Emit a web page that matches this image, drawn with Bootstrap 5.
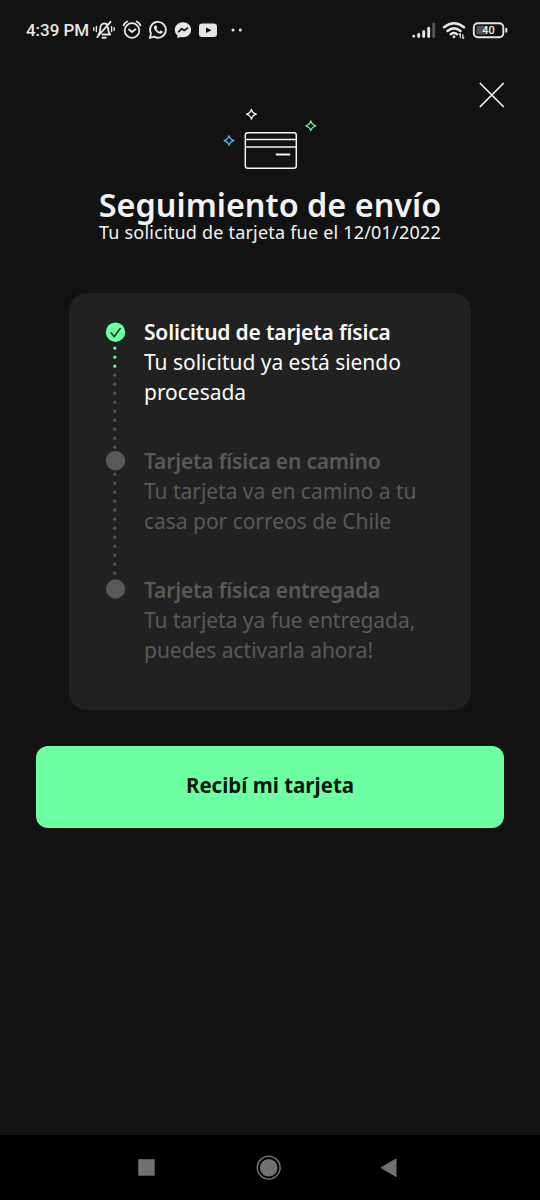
<!DOCTYPE html>
<html lang="es">
<head>
<meta charset="utf-8">
<meta name="viewport" content="width=device-width, initial-scale=1">
<title>Seguimiento de envío</title>
<link href="https://cdn.jsdelivr.net/npm/bootstrap@5.3.0/dist/css/bootstrap.min.css" rel="stylesheet">
<style>
  body { background: #121212; color: #f2f2f2; font-family: "Noto Sans", sans-serif; }
  svg { display: block; flex: none; overflow: visible; }
  .screen { width: 540px; height: 1200px; }
  .status-bar { height: 60px; padding-left: 26px; font: 500 17px/20px Roboto, sans-serif; color: #e6e6e6; }
  .clock { width: 62px; white-space: nowrap; letter-spacing: -.05px; }
  .close-row { height: 48px; padding: 22px 35px 0 0; }
  .close-btn { width: 27px; height: 26px; }
  .hero-art { height: 79px; }
  .hero-title { font-size: 32.400px; line-height: 35px; font-weight: 600; white-space: nowrap; }
  .hero-sub { font-size: 18px; line-height: 20px; letter-spacing: .2px; white-space: nowrap; }
  .hero-title span, .hero-sub span { display: block; }
  .steps { margin: 50.500px 69px 0; height: 417px; padding: 24.500px 0 0 37px; border-radius: 18px; background: #212121; color: #fafafa; }
  .step { height: 129px; gap: 18px; font-size: 21px; line-height: 30px; letter-spacing: -.03px; white-space: nowrap; }
  .step.pending { color: #595959; }
  .step-name { font-weight: 600; letter-spacing: -.18px; }
  .cta { margin: 36px 36px 0; height: 82px; border-radius: 12px; font-size: 20.500px; font-weight: 700; line-height: 30px; }
  .cta, .cta:hover { background: #6dffa2; color: #07180d; }
  .cta span { display: block; margin-top: -3px; }
  .system-nav { height: 65px; background: #000; }
</style>
</head>
<body>
<div class="screen d-flex flex-column overflow-hidden">
  <header class="status-bar d-flex align-items-center">
    <span class="clock">4:39 PM</span>
    <svg width="452" height="36" viewBox="88 12 452 36" fill="none" stroke="#e6e6e6" stroke-width="1.800" stroke-linecap="round" stroke-linejoin="round">
      <!-- muted bell -->
      <path d="M98.500 34.500c1.600-1.600 1.700-3 1.700-5.500 0-3.300 1.600-5.300 4-5.600 1 0 1.700.3 2.300.7M108 27.500c.2 4 .6 5.500 2.200 7H102.500M97.300 37L110.500 21.800M102.500 37.800h3.300" stroke-width="1.900"/>
      <path d="M93.800 27.800v2.600M96.400 26.500v5M111.600 26.500v5M114.200 27.800v2.600" stroke-width="1.400"/>
      <!-- alarm clock -->
      <circle cx="132" cy="30.500" r="7.300"/><path d="M129 29.500l3 2.500 3.500-2.800M123.500 25.300q1-2.500 3.700-3.800M140.500 25.300q-1-2.500-3.700-3.800"/>
      <!-- whatsapp -->
      <path d="M149.800 38l1.200-4.500a7.900 7.900 0 1 1 3 3.100z"/>
      <path d="M155 25.600c-1.300.8-1.400 2.400-.3 4.200 1.500 2.400 3.700 4 5.900 4 1.300 0 2.300-1.100 2.200-2.200l-2.300-1.100-1.200 1.200c-1.400-.6-2.300-1.600-2.900-2.800l.9-1.100-1-2.200z" fill="#e6e6e6" stroke="none"/>
      <!-- messenger -->
      <path d="M183 22.300c-4.700 0-8.200 3.300-8.200 7.500 0 2.300 1 4.300 2.700 5.700v2.700l2.500-1.300c1 .3 2 .4 3 .4 4.700 0 8.100-3.200 8.100-7.500s-3.400-7.500-8.100-7.500z" fill="#e6e6e6" stroke="none"/>
      <path d="M178.800 31.700l3-3 2.500 1.800 3.200-2.400" stroke="#121212" stroke-width="1.700"/>
      <!-- youtube -->
      <rect x="199" y="23.500" width="18" height="13.500" rx="3.200" fill="#e6e6e6" stroke="none"/><path d="M206 27.500l5.500 2.800-5.500 2.800z" fill="#121212" stroke="none"/>
      <circle cx="233" cy="30" r="1.500" fill="#e6e6e6" stroke="none"/><circle cx="240.300" cy="30" r="1.500" fill="#e6e6e6" stroke="none"/>
      <!-- signal -->
      <g stroke-width="2.900"><path d="M413.700 36.200v.1M418.700 34.500v2M423.700 31.800v4.700M428.700 28.300v8.200"/><path d="M433.700 24.300v12.200" stroke="#555"/></g>
      <!-- wifi -->
      <path d="M444 27.200q10-8 20 0M447.500 31q6.500-5.200 13 0M450.800 34.200q3.200-2.300 6.200 0" stroke-width="2.500"/><circle cx="454" cy="36.800" r="1.400" fill="#e6e6e6" stroke="none"/>
      <path d="M460.300 37.500v-4l-1 1.200M462.800 34.500v4l1-1.200" stroke-width="1.200"/>
      <!-- battery -->
      <rect x="473.800" y="23.200" width="29.500" height="14" rx="4" stroke-width="1.900"/><rect x="476.500" y="25.800" width="10" height="8.800" rx="1" fill="#555" stroke="none"/><path d="M506.300 28.700v3" stroke-width="2"/>
      <text x="488.500" y="34.200" text-anchor="middle" font-family="Roboto" font-size="11" font-weight="500" fill="#f2f2f2" stroke="none">40</text>
    </svg>
  </header>

  <div class="close-row d-flex justify-content-end">
    <button class="close-btn btn p-0 border-0" aria-label="Cerrar">
      <svg width="27" height="26" viewBox="0 0 27 26" stroke="#f2f2f2" stroke-width="1.700" stroke-linecap="round"><path d="M2.300 1.500l23 23M25.300 1.500l-23 23"/></svg>
    </button>
  </div>

  <main class="flex-grow-1">
    <div class="hero-art d-flex justify-content-center">
      <svg width="120" height="79" viewBox="210 108 120 79" fill="none" stroke-width="1.500" stroke-linejoin="round">
        <g stroke="#f2f2f2"><rect x="245.300" y="132.800" width="51" height="35.500" rx="2.500"/><path d="M245.300 139.500h51M245.300 147h51"/><path d="M276.500 154.500h13" stroke-width="1.800" stroke-linecap="round"/></g>
        <path d="M251.400 109.300q1 3.800 4.900 4.900-3.900 1.100-4.900 4.900-1-3.800-4.900-4.900 3.900-1.100 4.900-4.900z" stroke="#f2f2f2" stroke-width="1.300"/>
        <path d="M229 135.600q1 3.800 4.900 4.900-3.900 1.100-4.900 4.900-1-3.800-4.900-4.900 3.900-1.100 4.900-4.900z" stroke="#45b6f2" stroke-width="1.300"/>
        <path d="M310.800 120.900q1 3.800 4.900 4.900-3.900 1.100-4.900 4.900-1-3.800-4.900-4.900 3.900-1.100 4.900-4.900z" stroke="#6df29a" stroke-width="1.300"/>
      </svg>
    </div>
    <h1 class="hero-title text-center mb-0"><span>Seguimiento de envío</span></h1>
    <p class="hero-sub text-center mb-0"><span>Tu solicitud de tarjeta fue el 12/01/2022</span></p>

    <section class="steps">
      <div class="step d-flex">
        <svg width="20" height="129" viewBox="0 0 20 129" fill="none" stroke-linecap="round">
          <circle cx="9.500" cy="15.200" r="9.700" fill="#6dffa2"/><path d="M5 15.800l3.200 3.700 6-8" stroke="#12331f" stroke-width="1.500"/>
          <path d="M8.800 31.200v18.100" stroke="#6dffa2" stroke-width="3.200" stroke-dasharray="0 9"/><path d="M8.800 58.200v72.100" stroke="#595959" stroke-width="3.200" stroke-dasharray="0 9"/>
        </svg>
        <div><div class="step-name"><span>Solicitud de tarjeta física</span></div><div><span>Tu solicitud ya está siendo</span><br><span>procesada</span></div></div>
      </div>
      <div class="step pending d-flex">
        <svg width="20" height="129" viewBox="0 0 20 129" fill="none" stroke-linecap="round">
          <circle cx="9.500" cy="14.700" r="9.700" fill="#595959"/><path d="M8.800 28.200v99.100" stroke="#595959" stroke-width="3.200" stroke-dasharray="0 9"/>
        </svg>
        <div><div class="step-name"><span>Tarjeta física en camino</span></div><div><span>Tu tarjeta va en camino a tu</span><br><span>casa por correos de Chile</span></div></div>
      </div>
      <div class="step pending d-flex">
        <svg width="20" height="129" viewBox="0 0 20 129"><circle cx="9.500" cy="14" r="9.700" fill="#595959"/></svg>
        <div><div class="step-name"><span>Tarjeta física entregada</span></div><div><span>Tu tarjeta ya fue entregada,</span><br><span>puedes activarla ahora!</span></div></div>
      </div>
    </section>

    <div class="d-grid"><button class="cta btn border-0 p-0"><span>Recibí mi tarjeta</span></button></div>
  </main>

  <nav class="system-nav">
    <svg width="540" height="65" viewBox="0 1135 540 65" fill="#707070">
      <rect x="138.200" y="1159.200" width="16.500" height="16.500"/>
      <circle cx="268.700" cy="1167.700" r="8.800"/><circle cx="268.700" cy="1167.700" r="11.400" fill="none" stroke="#707070" stroke-width="1.500"/>
      <path d="M381 1167.700l15-8.700v17.500z" stroke="#707070" stroke-linejoin="round"/>
    </svg>
  </nav>
</div>
<script src="https://cdn.jsdelivr.net/npm/bootstrap@5.3.0/dist/js/bootstrap.bundle.min.js"></script>
</body>
</html>
